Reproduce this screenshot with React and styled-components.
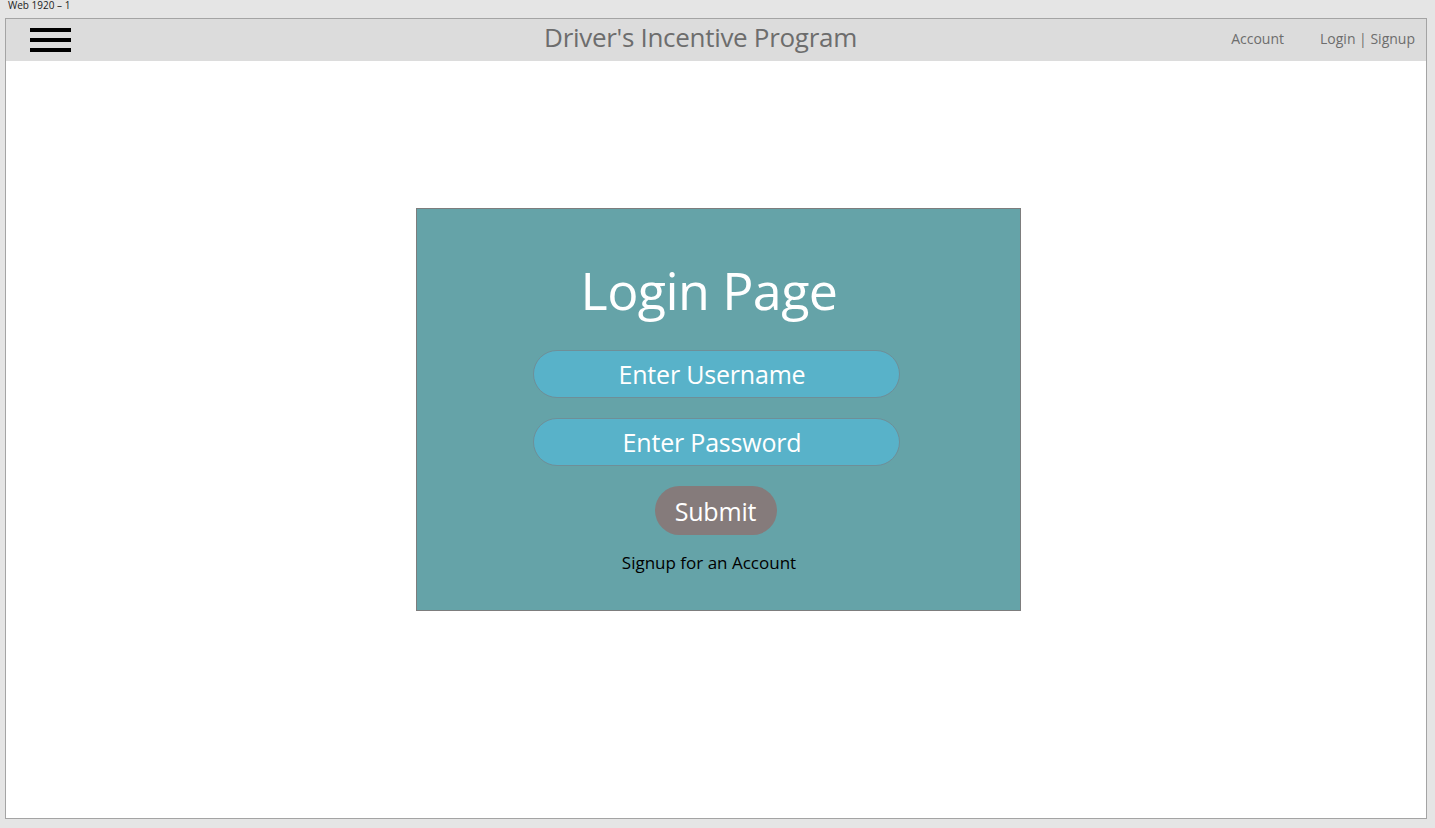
import React from 'react';
import styled, { createGlobalStyle } from 'styled-components';

const Global = createGlobalStyle`
  body {
    margin: 0;
    background: #e5e5e5;
    font-family: "Open Sans", "Noto Sans", sans-serif;
  }
`;

const Label = styled.div`
  height: 18px;
  padding-left: 8px;
  font-size: 10px;
  line-height: 10px;
  color: #222;
`;

const Frame = styled.div`
  margin-left: 5px;
  width: 1420px;
  height: 799px;
  border: 1px solid #a4a4a4;
  background: #fff;
  display: flex;
  flex-direction: column;
`;

const Header = styled.header`
  height: 42px;
  background: #dcdcdc;
  display: grid;
  grid-template-columns: 1fr auto 1fr;
  align-items: center;
  padding: 0 11px 0 24px;
`;

const Burger = styled.div`
  width: 41px;
  display: flex;
  flex-direction: column;
  gap: 6px;
  span {
    height: 4px;
    background: #000;
  }
`;

const Title = styled.h1`
  margin: 0;
  font-size: 26px;
  font-weight: 400;
  color: #6d6d6d;
  letter-spacing: -0.3px;
  transform: translate(-22px, -3px);
`;

const Nav = styled.nav`
  justify-self: end;
  display: flex;
  gap: 36px;
  font-size: 14px;
  color: #6d6d6d;
  transform: translateY(-2px);
`;

const Main = styled.main`
  flex: 1;
  display: flex;
  justify-content: center;
  padding-top: 147px;
  padding-left: 4px;
`;

const Card = styled.section`
  width: 603px;
  background: #65a3a8;
  border: 1px solid #7d7d7d;
  display: flex;
  flex-direction: column;
  align-items: center;
  padding-top: 48px;
  height: 353px;
`;

const Heading = styled.h2`
  margin: 0 0 27px -18px;
  font-size: 52px;
  line-height: 66px;
  font-weight: 400;
  color: #fff;
  letter-spacing: -0.6px;
`;

const Pill = styled.div`
  width: 357px;
  height: 46px;
  padding-right: 8px;
  margin: 0 0 20px -4px;
  border-radius: 24px;
  border: 1px solid #6e8f98;
  background: #58b2c9;
  color: #fff;
  font-size: 25px;
  letter-spacing: -0.2px;
  display: flex;
  align-items: center;
  justify-content: center;
`;

const Submit = styled.button`
  width: 122px;
  height: 49px;
  padding: 0;
  margin-left: -5px;
  border-radius: 25px;
  border: none;
  background: #857b7b;
  color: #fff;
  font-family: inherit;
  font-size: 25px;
  letter-spacing: -0.2px;
`;

const SignupLink = styled.div`
  margin: 16px 0 0 -18px;
  font-size: 17px;
  color: #000;
`;

export default function App() {
  return (
    <>
      <Global />
      <Label>Web 1920 – 1</Label>
      <Frame>
        <Header>
          <Burger>
            <span />
            <span />
            <span />
          </Burger>
          <Title>Driver's Incentive Program</Title>
          <Nav>
            <span>Account</span>
            <span>Login | Signup</span>
          </Nav>
        </Header>
        <Main>
          <Card>
            <Heading>Login Page</Heading>
            <Pill>Enter Username</Pill>
            <Pill>Enter Password</Pill>
            <Submit>Submit</Submit>
            <SignupLink>Signup for an Account</SignupLink>
          </Card>
        </Main>
      </Frame>
    </>
  );
}
